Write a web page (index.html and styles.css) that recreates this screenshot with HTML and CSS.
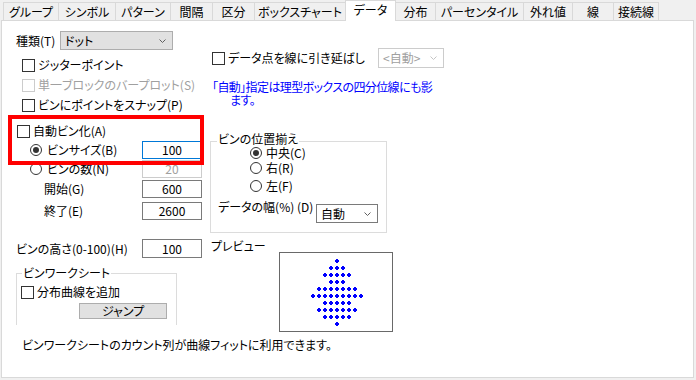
FILE: index.html
```html
<!doctype html>
<html lang="ja">
<head>
<meta charset="utf-8">
<title>データ</title>
<link rel="stylesheet" href="styles.css">
</head>
<body>
<div class="tabs">
	<div class="tab" style="width:55px">グループ</div>
	<div class="tab" style="width:57px">シンボル</div>
	<div class="tab" style="width:55px">パターン</div>
	<div class="tab" style="width:42px">間隔</div>
	<div class="tab" style="width:42px">区分</div>
	<div class="tab" style="width:91px">ボックスチャート</div>
	<div class="tab on" style="width:51px">データ</div>
	<div class="tab" style="width:40px">分布</div>
	<div class="tab" style="width:88px">パーセンタイル</div>
	<div class="tab" style="width:49px">外れ値</div>
	<div class="tab" style="width:41px">線</div>
	<div class="tab last" style="width:46px">接続線</div>
</div>
<div class="panel">
	<div class="cols">
		<div class="left">
			<div class="kind">
				<span class="kind-label">種類(T)</span>
				<div class="combo kind-combo">ドット<svg width="7" height="4"><path d="M0.5 0.5 3.5 3.5 6.5 0.5" fill="none" stroke="#606060"/></svg></div>
			</div>
			<div class="opts">
				<div class="check"><span class="cb"></span>ジッターポイント</div>
				<div class="check dim"><span class="cb off"></span>単一ブロックのバープロット(S)</div>
				<div class="check"><span class="cb"></span>ビンにポイントをスナップ(P)</div>
			</div>
			<div class="check auto"><span class="cb"></span>自動ビン化(A)</div>
			<div class="field binsize"><span class="rd sel"></span><span class="flabel">ビンサイズ(B)</span><span class="num focus">100</span></div>
			<div class="field bincount"><span class="rd"></span><span class="flabel">ビンの数(N)</span><span class="num off">20</span></div>
			<div class="field start"><span class="flabel">開始(G)</span><span class="num">600</span></div>
			<div class="field end"><span class="flabel">終了(E)</span><span class="num">2600</span></div>
			<div class="field hgt"><span class="flabel">ビンの高さ(0-100)(H)</span><span class="num">100</span></div>
			<div class="group sheet">
				<div class="group-title">ビンワークシート</div>
				<div class="check curve"><span class="cb"></span>分布曲線を追加</div>
				<div class="btn">ジャンプ</div>
			</div>
		</div>
		<div class="right">
			<div class="check extend">
				<span class="cb"></span>データ点を線に引き延ばし
				<div class="combo auto-combo">&lt;自動&gt;<svg width="7" height="4"><path d="M0.5 0.5 3.5 3.5 6.5 0.5" fill="none" stroke="#c4c4c4"/></svg></div>
			</div>
			<div class="hint">
				<div class="hint-line">「自動」指定は理型ボックスの四分位線にも影</div>
				<div class="hint-line second">ます。</div>
			</div>
			<div class="group align">
				<div class="group-title">ビンの位置揃え</div>
				<div class="radio r-center"><span class="rd sel"></span>中央(C)</div>
				<div class="radio r-right"><span class="rd"></span>右(R)</div>
				<div class="radio r-left"><span class="rd"></span>左(F)</div>
				<div class="width-row">
					<span class="width-label">データの幅(%) (D)</span>
					<div class="combo width-combo">自動<svg width="7" height="4"><path d="M0.5 0.5 3.5 3.5 6.5 0.5" fill="none" stroke="#606060"/></svg></div>
				</div>
			</div>
			<div class="preview-label">プレビュー</div>
			<div class="preview">
				<svg width="112" height="78">
					<defs>
						<pattern id="dot" patternUnits="userSpaceOnUse" x="54" y="5" width="6" height="7">
							<path d="M2,1h2v1h1v2h-1v1h-2v-1h-1v-2h1z" fill="#0000ff"/>
						</pattern>
					</defs>
					<g fill="url(#dot)">
						<rect x="54" y="5" width="6" height="7"/>
						<rect x="48" y="12" width="18" height="7"/>
						<rect x="42" y="19" width="30" height="7"/>
						<rect x="48" y="26" width="18" height="7"/>
						<rect x="36" y="33" width="42" height="7"/>
						<rect x="30" y="40" width="54" height="7"/>
						<rect x="42" y="47" width="30" height="7"/>
						<rect x="36" y="54" width="42" height="7"/>
						<rect x="42" y="61" width="30" height="7"/>
						<rect x="54" y="68" width="6" height="7"/>
					</g>
				</svg>
			</div>
		</div>
	</div>
	<div class="note">ビンワークシートのカウント列が曲線フィットに利用できます。</div>
	<div class="mark"></div>
</div>
</body>
</html>
```

FILE: styles.css
```css
body
{
	margin:0;
	background:#f0f0f0;
	font-family:"Noto Sans CJK JP","Noto Sans CJK SC",sans-serif;
	font-size:12px;
	line-height:14px;
	color:#000;
	font-feature-settings:"palt";
}
.tabs
{
	display:flex;
	align-items:flex-end;
	height:20px;
	padding-left:3px;
}
.tab
{
	box-sizing:border-box;
	height:18px;
	border:1px solid #d9d9d9;
	border-right:none;
	border-bottom:none;
	background:#f0f0f0;
	text-align:center;
	line-height:17px;
	white-space:nowrap;
}
.tab.last
{
	border-right:1px solid #d9d9d9;
}
.tab.on
{
	position:relative;
	z-index:1;
	height:21px;
	margin-right:-1px;
	margin-bottom:-1px;
	border-right:1px solid #d9d9d9;
	background:#fff;
	line-height:18px;
}
.panel
{
	position:relative;
	box-sizing:border-box;
	width:693px;
	height:358px;
	margin-left:1px;
	border:1px solid #d9d9d9;
	background:#fff;
}
.cols
{
	display:grid;
	grid-template-columns:208px 1fr;
}

/* controls */
.cb
{
	box-sizing:border-box;
	flex:none;
	width:13px;
	height:13px;
	margin-right:3px;
	border:1px solid #333;
	background:#fff;
}
.cb.off
{
	border-color:#cccccc;
}
.rd
{
	box-sizing:border-box;
	display:flex;
	align-items:center;
	justify-content:center;
	flex:none;
	width:12px;
	height:12px;
	margin-right:5px;
	border:1px solid #333;
	border-radius:50%;
	background:#fff;
}
.rd.sel::after
{
	content:"";
	width:6px;
	height:6px;
	border-radius:50%;
	background:#333;
}
.check
{
	display:flex;
	align-items:center;
	height:20px;
	white-space:nowrap;
}
.dim
{
	color:#a0a0a0;
}
.combo
{
	box-sizing:border-box;
	display:flex;
	align-items:center;
	justify-content:space-between;
	height:19px;
	padding:0 6px 0 4px;
	border:1px solid #adadad;
	background:#e1e1e1;
}
.num
{
	box-sizing:border-box;
	width:60px;
	height:18px;
	border:1px solid #7a7a7a;
	background:#fff;
	text-align:center;
	line-height:16px;
}
.num.focus
{
	border-color:#0078d7;
}
.num.off
{
	border-color:#cccccc;
	color:#a0a0a0;
}
.group
{
	box-sizing:border-box;
	border:1px solid #dcdcdc;
}
.group-title
{
	width:max-content;
	padding:0 1px;
	background:#fff;
	white-space:nowrap;
}
.btn
{
	box-sizing:border-box;
	width:88px;
	height:16px;
	border:1px solid #adadad;
	background:#e1e1e1;
	text-align:center;
	line-height:14px;
}

/* left column */
.kind
{
	display:flex;
	align-items:center;
	height:19px;
	margin-top:10px;
	padding-left:14px;
}
.kind-label
{
	width:44px;
}
.kind-combo
{
	width:113px;
}
.opts
{
	margin-top:5px;
	padding-left:20px;
}
.auto
{
	margin-top:6px;
	padding-left:15px;
}
.field
{
	display:flex;
	align-items:center;
	height:18px;
	padding-right:8px;
	white-space:nowrap;
}
.flabel
{
	flex:1;
}
.binsize,
.bincount
{
	padding-left:28px;
}
.bincount
{
	margin-top:1px;
}
.start
{
	margin-top:2px;
	padding-left:42px;
}
.end
{
	margin-top:4px;
	padding-left:42px;
}
.hgt
{
	height:19px;
	margin-top:19px;
	padding-left:14px;
}
.hgt .num
{
	height:19px;
	line-height:17px;
}
.sheet
{
	width:161px;
	height:52px;
	margin:15px 0 0 14px;
	border-bottom:none;
}
.sheet .group-title
{
	margin:-8px 0 0 5px;
}
.curve
{
	height:14px;
	margin-top:5px;
	padding-left:4px;
}
.sheet .btn
{
	margin:4px 0 0 62px;
}

/* right column */
.extend
{
	width:232px;
	margin-top:27px;
	padding-left:2px;
}
.auto-combo
{
	width:66px;
	height:20px;
	margin-left:auto;
	border-color:#cccccc;
	background:#fff;
	color:#a0a0a0;
}
.hint
{
	margin-top:12px;
	color:#0000ff;
	line-height:13px;
	letter-spacing:-0.6px;
}
.hint-line
{
	padding-left:2px;
	white-space:nowrap;
}
.hint-line.second
{
	padding-left:20px;
}
.align
{
	width:177px;
	height:92px;
	margin-top:35px;
}
.align .group-title
{
	margin:-10px 0 0 6px;
}
.radio
{
	display:flex;
	align-items:center;
	height:14px;
	padding-left:39px;
}
.radio .rd
{
	margin-right:4px;
}
.r-right
{
	margin-top:1px;
}
.r-left
{
	margin-top:4px;
}
.width-row
{
	display:flex;
	align-items:flex-start;
	margin-top:7px;
	padding-left:7px;
}
.width-label
{
	width:98px;
	white-space:nowrap;
}
.width-combo
{
	width:62px;
	margin-top:4px;
	border-color:#7a7a7a;
	background:#fff;
}
.preview-label
{
	margin-top:7px;
	padding-left:1px;
	line-height:12px;
}
.preview
{
	box-sizing:border-box;
	width:114px;
	height:80px;
	margin-left:69px;
	border:1px solid #696969;
}
.preview svg
{
	display:block;
}
.note
{
	margin-top:6px;
	padding-left:20px;
}
.mark
{
	position:absolute;
	left:6px;
	top:94px;
	box-sizing:border-box;
	width:196px;
	height:50px;
	border:4px solid #ff0000;
}
```
